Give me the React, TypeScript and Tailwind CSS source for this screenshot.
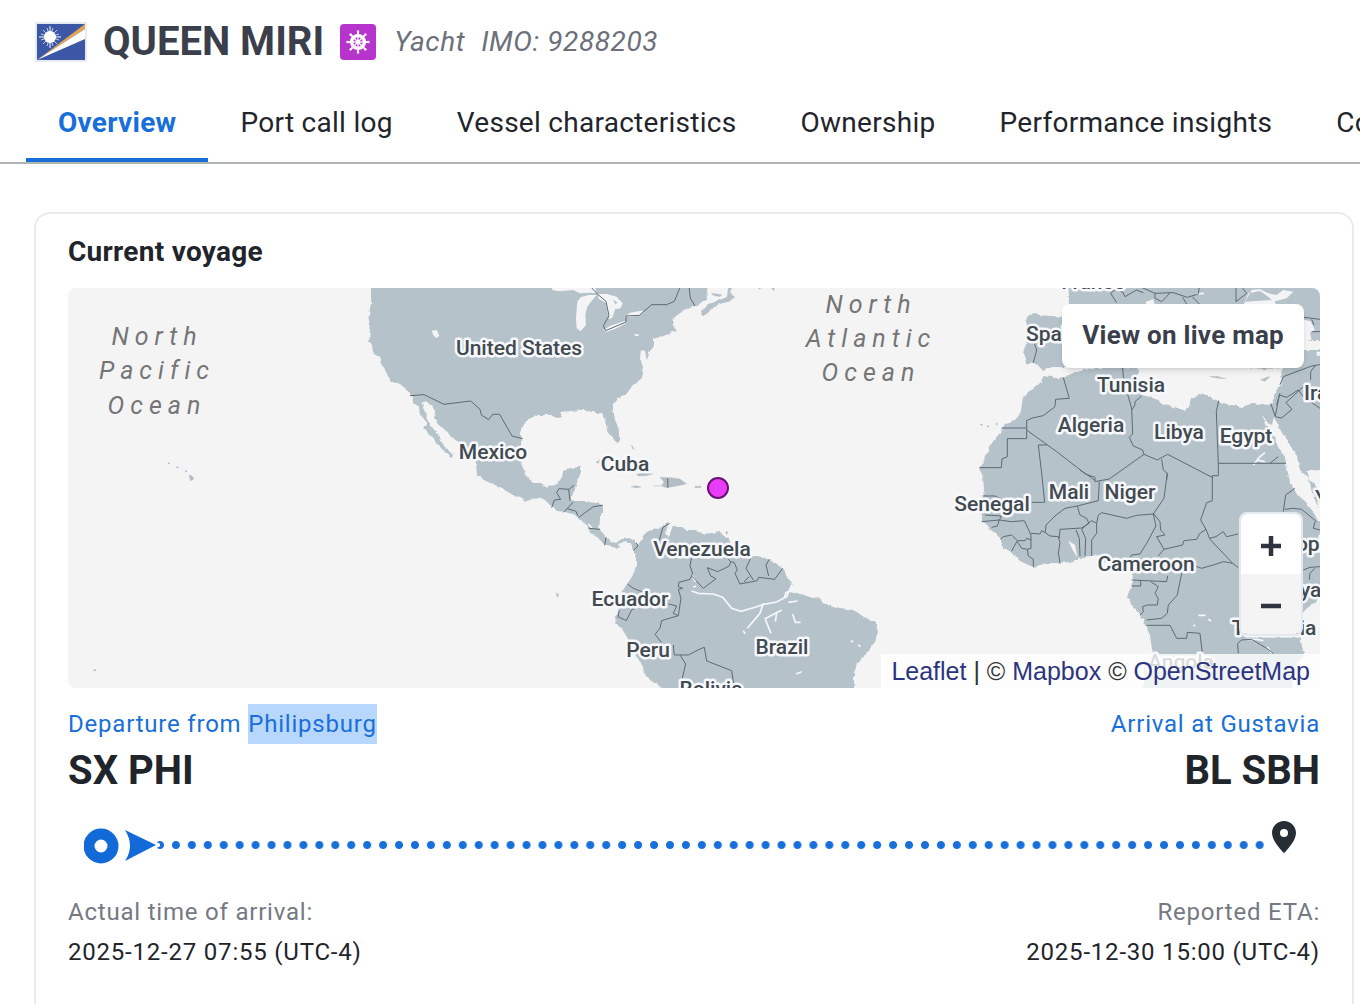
import { useState } from "react"
import clsx from "clsx";

interface MapLabel {
    text: string
    x: number
    y: number
    start?: boolean
}

interface BorderSheet {
    x: number
    y: number
    borders: string
    water?: string
    rivers?: string
    islands?: string
}

const tabs = ["Overview", "Port call log", "Vessel characteristics", "Ownership", "Performance insights", "Commercial"];

const labels: MapLabel[] = [
    { text: "United States", x: 519, y: 355 },
    { text: "Mexico", x: 493, y: 459 },
    { text: "Cuba", x: 625, y: 471 },
    { text: "Venezuela", x: 702, y: 556 },
    { text: "Ecuador", x: 630, y: 606 },
    { text: "Peru", x: 648, y: 657 },
    { text: "Brazil", x: 782, y: 654 },
    { text: "Bolivia", x: 711, y: 696 },
    { text: "France", x: 1093, y: 289 },
    { text: "Spain", x: 1026, y: 341, start: true },
    { text: "Tunisia", x: 1131, y: 392 },
    { text: "Algeria", x: 1091, y: 432 },
    { text: "Libya", x: 1179, y: 439 },
    { text: "Egypt", x: 1246, y: 443 },
    { text: "Mali", x: 1069, y: 499 },
    { text: "Niger", x: 1130, y: 499 },
    { text: "Senegal", x: 992, y: 511 },
    { text: "Cameroon", x: 1146, y: 571 },
    { text: "Angola", x: 1181, y: 669 },
    { text: "Tanzania", x: 1274, y: 635 },
    { text: "Iran", x: 1304, y: 400, start: true },
    { text: "Yemen", x: 1315, y: 505, start: true },
    { text: "Ethiopia", x: 1260, y: 551, start: true },
    { text: "Kenya", x: 1264, y: 597, start: true },
];

const oceans: MapLabel[] = [
    { text: "North", x: 157, y: 345 },
    { text: "Pacific", x: 157, y: 379 },
    { text: "Ocean", x: 157, y: 414 },
    { text: "North", x: 871, y: 313 },
    { text: "Atlantic", x: 871, y: 347 },
    { text: "Ocean", x: 871, y: 381 },
];

const land = [
    // americas
    "M371 280V303L369 315 368 322 370 330 369 341 372 345 373 352 379 358 383 367 386 372 390 380 392 382 400 384 405 388 410 393 411 396 414 403 419 407 420 414 424 419 427 425 423 428 428 433 432 436 436 442 440 447 446 453 451 457 453 455 449 451 444 445 440 441 438 434 434 430 431 425 428 420 426 414 423 408 422 402 427 402 432 405 436 412 434 418 437 423 443 429 450 435 454 439 460 443 464 450 474 459 476 465 477 475 490 483 500 487 513 495 527 501 538 497 545 500 552 507 557 511 565 512 573 514 579 518 584 523 589 529 590 533 595 535 600 540 606 545 612 546 617 549 619 547 618 544 625 541 631 545 633 550 636 553 636 567 633 575 627 584 622 592 619 603 618 612 615 617 616 623 622 629 627 637 632 647 637 657 643 667 644 673 650 679 660 686 663 695H854V673L857 663 864 658 867 652 875 642 878 632 875 622 867 618 853 610 840 608 823 603 820 599 810 597 797 593 789 592 792 583 787 577 783 568 777 564 768 559 757 557 744 556 737 550 728 538 720 532 712 533 703 534 695 530 687 530 682 527 673 527 670 532 668 537 665 533 670 523 667 522 662 527 655 529 647 532 642 539 638 545 636 542 630 538 623 539 620 539 615 543 610 541 606 537 602 532 599 528 600 520 602 512 603 505 597 502 587 501 575 501 571 500 573 493 575 488 577 483 581 473 581 467 570 468 563 471 562 478 557 484 548 487 540 483 533 483 528 478 523 468 519 458 522 438 520 433 522 427 525 422 537 415 550 415 557 418 563 417 560 412 570 411 583 410 597 413 602 413 605 420 607 430 612 437 617 443 619 440 619 430 616 422 613 413 613 406 617 400 627 393 633 386 642 378 643 372 642 363 640 358 641 349 645 352 647 360 650 351 653 346 653 339 660 337 672 332 677 331 673 326 673 319 680 312 690 308 695 306 703 302 708 299 707 291 709 280Z",
    // nova scotia
    "M701 311L702 316 707 314 713 307 720 304 730 301 735 297 730 292 736 280 728 288 727 297 717 301 708 304Z",
    // africa
    "M1044 375L1055 378 1065 377 1073 373 1087 369 1100 368 1122 367 1137 368 1139 372 1137 378 1143 387 1142 395 1153 398 1163 403 1173 407 1185 410 1189 407 1191 398 1198 394 1207 395 1218 401 1227 404 1242 407 1253 403 1268 405 1273 403 1275 397 1278 387 1283 382 1280 375 1283 368 1262 369 1240 366 1240 350H1330V490L1320 490 1310 480 1300 470 1297 457 1290 445 1282 433 1277 423 1274 417 1272 425 1268 423 1262 415 1265 424 1273 433 1278 447 1285 457 1287 468 1290 483 1298 495 1307 503 1315 515 1318 521 1330 522V598H1320L1305 610 1300 618 1300 633 1302 647 1305 653 1296 665 1290 695H1143L1144 670 1152 650 1150 635 1145 625 1142 617 1133 607 1127 597 1132 585 1133 573 1120 570 1104 560 1098 555 1083 557 1070 562 1057 563 1047 563 1033 567 1022 562 1012 552 1003 548 1002 540 990 528 982 522 982 515 982 498 984 490 983 478 980 470 985 457 992 443 1000 433 1003 427 1018 418 1021 410 1023 397 1032 390 1040 383Z",
    // europe
    "M1068 280L1069 297V304L1063 317 1050 316 1033 314 1025 318 1027 325V342L1023 352 1026 363 1037 364 1043 371 1052 367 1068 367 1080 340H1330V280Z",
    // arabia
    "M1307 470L1312 493 1318 507 1330 520V470Z",
].join(" ");

// each sheet is drawn at three times the map scale
const sheets: BorderSheet[] = [
    {
        x: 340, y: 280,
        borders: "M210 347L252 344 312 373 392 363 420 388 424 405 446 419 458 403 479 403 516 468 548 476",
        water: "M712 65L722 52 745 45 770 45 755 62 742 80 736 105 738 135 722 154 710 145 708 115ZM775 42L800 42 830 50 848 70 842 85 825 88 818 112 808 118 802 95 798 70 775 55ZM635 30L660 34 700 30 720 40 752 38 770 40 765 20 640 20ZM790 150L810 138 855 122 860 128 830 145 800 156ZM852 112L870 98 905 92 912 97 895 108ZM275 152L290 150 298 168 288 174 280 165Z",
        islands: "M875 495l8 14 -5 -4zM768 548l12 -10 -4 12zM820 60l12 8 -6 4z",
    },
    {
        x: 570, y: 284,
        borders: "M60 6L82 30 108 52 117 95 100 125 107 140 168 114 168 96 208 94 245 62 290 62 313 52 332 6M357 6L361 42 375 66",
        rivers: "M415 30L432 48 446 44M194 152l12 2",
        islands: "M425 28L455 32 450 38 430 34ZM560 8h14l-4 8zM600 8h14l-2 12z",
    },
    {
        x: 460, y: 440,
        borders: "M275 203L283 180 302 178 290 158 297 146 327 148 342 136M326 148L330 182M311 217L340 186M322 206L348 214 354 228M355 233L400 200 428 196M386 265L420 268M438 292L434 316M528 308L534 318 520 331M629 250L609 262 598 300M503 432L520 445 545 455M694 355L690 378 698 400 690 418 657 427 655 440 668 445 655 448 663 475 655 527 605 542 600 565 585 583 605 608M478 512L474 530 499 542 515 510 525 505M625 492L650 498 640 520 655 527M640 615L643 645 685 645 720 627M660 645L677 672 667 715M623 115L624 143",
        islands: "M580 137L605 138 612 125 600 112 635 113 660 117 680 132 650 138 620 143 605 138ZM512 140L530 137 543 141 530 144ZM530 103L550 98 578 102 560 107 535 108ZM705 139h18v4h-18zM515 18l6 10 -4 -4zM464 0h10l2 7h-6zM288 458L297 465 292 472Z",
        rivers: "M385 252L396 264M695 405L706 425",
    },
    {
        x: 640, y: 470,
        borders: "M155 318L190 355 228 326 212 318 202 293 233 305 268 288 272 275 283 278 292 300 285 310 300 342 352 332 356 322 404 328 428 295M260 262L272 275M332 265L318 295 340 330M312 335L328 320M388 268L378 285 386 318M180 537L193 532 200 573 275 602 281 640",
        rivers: "M155 363L175 370 220 372 248 382 275 415 303 424 345 412 372 403 410 396 440 380 455 345M432 385L438 368 452 362M370 400L360 430 322 475M374 447L425 420M376 448L393 490M458 432L466 457 482 457M410 430L406 455M445 397L473 393M157 320L168 335M160 352l8 -4M468 612L485 605M632 514h8M655 525l6 5M310 482l5 10",
        islands: "M258 184h4v8h-4z",
    },
    {
        x: 940, y: 280,
        borders: "M283 190L290 210 280 248M370 293L388 355 347 358 345 380 310 407 277 414 260 422 260 452M185 444L260 444M260 452L260 476 202 476 202 530 186 537 184 563 118 563M260 450L350 515 438 583 465 592 465 605 508 597 612 523 608 510 580 498 568 472 578 462 575 385 565 350M548 264L550 290 565 350M612 523L652 540 683 523 818 593M835 587L835 552 829 395 836 362M835 550L1038 550M990 550L1015 530M575 390L585 375 585 365 605 348M322 495L295 495 305 580 314 667M665 538L670 570 682 580 680 600M993 372L1006 410 1025 414 1056 388 1038 368 1090 320M1018 345L1040 352 1075 330 1090 350 1140 385M1018 345L1006 408M1020 340L1010 375M1020 315L1030 290 1115 258 1140 254M1112 300L1112 275 1125 258M512 40L525 30 548 36 555 50 590 30 610 38M512 40L530 68M645 40L700 38 742 52 775 42 778 20M645 40L645 55 665 65 680 50 690 38M600 20L645 40M728 52L740 72M757 50L778 72M888 20L888 65 920 40 905 20M1092 112L1140 118M1115 155L1140 155M1115 118L1122 135",
        water: "M915 65L925 40 960 33 985 50 1000 65 1040 55 1060 35 1030 30 1010 45 985 40 960 28 935 30 910 75 1010 75 1000 60ZM1085 118L1112 124 1125 150 1110 158 1115 180 1085 185ZM618 65L640 58 645 75 618 75ZM1130 215h14v12h-14z",
        rivers: "M768 42L792 40M940 555L960 530 975 518M950 540L975 545",
        islands: "M808 290L830 289 858 296 830 294ZM962 300L980 292 990 290 975 304ZM122 432h5v4h-5zM142 437h5v4h-5zM168 430h4v4h-4z",
    },
    {
        x: 940, y: 470,
        borders: "M130 78L165 78 178 85M135 135L185 138 178 150 125 155M178 150L172 168 155 172M178 150L215 155 253 152 273 195 273 235 262 238 265 258 280 268 280 290M182 208L190 200 215 195 232 212 222 230 215 243M232 215L245 235 262 238M232 212L255 212 260 205 273 210M273 190L300 192 305 182 316 188 318 165 345 138 375 115 412 108 475 92 478 35M316 188L330 198 355 200 360 218 355 250 360 278M360 178L358 205M360 178L425 174 447 160 440 145 420 135 412 108M408 180L418 205 420 258M425 178L437 205 435 258M455 258L455 210 470 190 470 160 455 152 445 160 425 178M470 160L475 135 485 128 560 145 590 136 640 132 672 85 682 10M640 130L660 155 662 180 675 195 650 200 672 238 728 225 732 212 770 208 780 190 798 178 782 150 800 98 817 92 817 17 835 17M640 132L648 168 620 220 600 252 575 255 565 268M798 178L810 208 878 280 895 293M810 205L828 200 850 185 860 200 895 192M672 238L655 258M878 280L850 275 820 285 785 295 765 288M575 330L680 335 683 318M725 310L712 375 685 405 682 430 665 445 620 450M575 348L602 348 602 332M632 335L655 350 645 370 655 385 652 405 622 405 608 410 610 425 600 435M620 466L690 466 710 505 740 505 742 487 780 490 787 550M275 97L314 97M895 550L893 520 905 510 935 508 980 535 1000 550M1030 125L1037 75 1065 55M1035 118L1060 115 1085 118 1130 155M1125 155L1120 175 1140 180M1090 300L1110 292 1140 290M1108 330L1110 310 1125 295M420 0L450 20 465 32",
        water: "M385 212L405 225 412 262 398 240Z",
        rivers: "M775 436h22M805 448l8 5M760 465l6 3M920 508L950 508 970 512M982 530L995 550",
    },
    {
        x: 60, y: 280,
        borders: "",
        islands: "M387 585L396 588 402 597 392 603ZM324 548h4v4h-4zM350 560h5v4h-5zM376 572h5v4h-5zM101 1169h7v3h-7z",
    },
];

function WorldMap() {
    return (
        <svg viewBox="68 288 1252 400" preserveAspectRatio="xMidYMid slice" className="block w-full h-full" role="img" aria-label="Vessel position">
            <defs>
                <filter id="coast" x="0" y="0" width="1" height="1">
                    <feTurbulence type="fractalNoise" baseFrequency="0.18" numOctaves="2" seed="4" result="noise" />
                    <feDisplacementMap in="SourceGraphic" in2="noise" scale="4" xChannelSelector="R" yChannelSelector="G" />
                </filter>
            </defs>
            <path d={land} fill="#b6c2ca" filter="url(#coast)" />
            {sheets.map((sheet, i) => (
                <g key={i} transform={`translate(${sheet.x} ${sheet.y}) scale(0.3333)`}>
                    {sheet.water && <path d={sheet.water} fill="#f4f4f6" />}
                    {sheet.rivers && <path d={sheet.rivers} fill="none" stroke="#f6f7fb" strokeWidth="5" />}
                    {sheet.islands && <path d={sheet.islands} fill="#b3bdc5" stroke="#b3bdc5" strokeWidth="1" />}
                    <path d={sheet.borders} fill="none" stroke="#5d6a73" strokeWidth="3" strokeLinejoin="round" />
                </g>
            ))}
            {oceans.map((label, i) => (
                <text key={i} x={label.x} y={label.y} textAnchor="middle"
                    className="fill-[#757575] text-[25px] italic tracking-[6px]">
                    {label.text}
                </text>
            ))}
            {labels.map((label) => (
                <text key={label.text} x={label.x} y={label.y} textAnchor={label.start ? "start" : "middle"}
                    className="fill-[#424a50] stroke-[#f6f8fc] stroke-[5px] text-[21px] font-medium [paint-order:stroke] [stroke-linejoin:round]">
                    {label.text}
                </text>
            ))}
            <circle cx="718" cy="488" r="10" fill="#e83cf7" stroke="#6b1173" strokeWidth="2" />
        </svg>
    )
}

function Flag() {
    return (
        <svg viewBox="0 0 48 36" className="w-12 h-9 mr-[2px] shrink-0 outline-2 outline-[#e6ebf2]" aria-label="Marshall Islands">
            <rect width="48" height="36" fill="#3b57a6" />
            <path d="M0 36L48 0V5Z" fill="#e2a650" />
            <path d="M0 36L48 5V15Z" fill="#fff" />
            <circle cx="13" cy="13" r="6" fill="#fff" />
            <path d="M13 2V24M2 13H24" stroke="#fff" strokeWidth="1" />
            <path d="M6 6L20 20M20 6L6 20M10 4L16 22M16 4L10 22M4 10L22 16M4 16L22 10" stroke="#fff" strokeWidth="0.7" />
        </svg>
    )
}

function WheelBadge() {
    const spokes = [0, 45, 90, 135, 180, 225, 270, 315];
    return (
        <svg viewBox="0 0 36 36" className="w-9 h-9 shrink-0" aria-hidden="true">
            <rect width="36" height="36" rx="4" fill="#b634cb" />
            <g transform="translate(18 18)">
                <circle r="6.4" fill="none" stroke="#fff" strokeWidth="3.4" />
                <circle r="1.9" fill="#fff" />
                {spokes.map((angle) => (
                    <g key={angle} transform={`rotate(${angle})`}>
                        <path d="M0 0V-6" stroke="#fff" strokeWidth="1.3" />
                        <path d="M-0.8 -7H0.8L1.3 -11.5H-1.3Z" fill="#fff" />
                    </g>
                ))}
            </g>
        </svg>
    )
}

export default function App() {
    const [activeTab, setActiveTab] = useState<string>("Overview");

    return (
        <div className="h-screen overflow-hidden bg-white font-[Roboto,sans-serif] text-[#1f252b]">
            <header className="flex items-center gap-4 pt-[18px] pl-[37px]">
                <Flag />
                <h1 className="text-[40px] leading-12 font-bold text-[#3b3f4b]">QUEEN MIRI</h1>
                <WheelBadge />
                <p className="flex gap-4 pl-0.5 text-[28px] leading-12 italic tracking-[0.02em] text-[#6c707b]">
                    <span>Yacht</span>
                    <span>IMO: 9288203</span>
                </p>
            </header>

            <nav role="tablist" className="flex mt-4 pl-[26px] border-b-2 border-[#b1b4b7] overflow-hidden">
                {tabs.map((tab) => (
                    <button key={tab} type="button" role="tab" aria-selected={activeTab === tab} onClick={() => setActiveTab(tab)}
                        className={clsx(
                            "h-20 px-8 pt-1.5 shrink-0 border-b-4 text-[28px] tracking-[0.01em] whitespace-nowrap cursor-pointer",
                            activeTab === tab ? "border-[#186fd9] text-[#186fd9] font-bold" : "border-transparent"
                        )}>
                        {tab}
                    </button>
                ))}
            </nav>

            <section className="mt-12 ml-[34px] mr-[6px] px-8 pt-5 pb-16 border-2 border-[#e8eaeb] rounded-2xl">
                <h2 className="mb-[18px] text-[28px] leading-9 font-bold tracking-[0.01em]">Current voyage</h2>

                <div className="relative h-100 rounded-lg overflow-hidden bg-[#f4f4f5]">
                    <WorldMap />
                    <button type="button"
                        className="absolute top-4 right-4 h-16 px-5 pb-0.5 rounded-lg bg-white text-[26px] font-bold text-[#3b3f4b] tracking-[0.01em] shadow-md cursor-pointer">
                        View on live map
                    </button>
                    <div className="absolute right-[17px] bottom-[52px] flex flex-col w-16 rounded-lg border-2 border-[#e3e9ee] overflow-hidden">
                        <button type="button" aria-label="Zoom in" className="flex items-center justify-center pt-1 h-15 bg-white cursor-pointer">
                            <svg viewBox="0 0 20 20" className="w-5 h-5"><path d="M10 0V20M0 10H20" stroke="#2f333f" strokeWidth="4.5" /></svg>
                        </button>
                        <button type="button" aria-label="Zoom out" className="flex items-center justify-center pt-1 h-15 bg-[#f4f4f5] cursor-pointer">
                            <svg viewBox="0 0 20 20" className="w-5 h-5"><path d="M0 10H20" stroke="#2f333f" strokeWidth="4.5" /></svg>
                        </button>
                    </div>
                    <div className="absolute right-0 bottom-0 px-2.5 bg-white/80 font-['Liberation_Sans',sans-serif] text-[25px] leading-[34px] text-[#333]">
                        <a href="#leaflet" className="text-[#2c3480]">Leaflet</a> | © <a href="#mapbox" className="text-[#2c3480]">Mapbox</a> © <a href="#osm" className="text-[#2c3480]">OpenStreetMap</a>
                    </div>
                </div>

                <div className="flex justify-between mt-4">
                    <div>
                        <a href="#departure" className="block text-[24px] leading-10 tracking-[0.033em] text-[#186fd9]">
                            Departure from <mark className="inline-block bg-[#b8d7fd] text-inherit">Philipsburg</mark>
                        </a>
                        <p className="text-[40px] leading-[54px] font-bold">SX PHI</p>
                    </div>
                    <div className="text-right">
                        <a href="#arrival" className="block text-[24px] leading-10 tracking-[0.033em] text-[#186fd9]">Arrival at Gustavia</a>
                        <p className="text-[40px] leading-[54px] font-bold">BL SBH</p>
                    </div>
                </div>

                <div className="flex items-center h-16 mt-3.5 pl-4 pr-6">
                    <svg viewBox="84 824 76 40" className="relative w-[76px] h-10 shrink-0" aria-hidden="true">
                        <path d="M124 829L158 845 124 862 131 846Z" fill="#fff" stroke="#fff" strokeWidth="4" />
                        <circle cx="101" cy="846" r="12" fill="none" stroke="#126ad8" strokeWidth="11" />
                        <path d="M125 830L156 845 125 861Q135 846 125 830Z" fill="#126ad8" />
                    </svg>
                    <div className="flex-1 h-2 mt-0.5 -ml-2 bg-[radial-gradient(circle,#186fd9_3.5px,transparent_4.5px)] bg-[length:16px_8px] bg-repeat-round" />
                    <svg viewBox="0 0 24 32" className="w-6 h-8 ml-1 mb-3.5 shrink-0" aria-hidden="true">
                        <path fillRule="evenodd" d="M12 0C5.4 0 0 5.2 0 11.8C0 19.5 7.5 27 11 31.3Q12 32.4 13 31.3C16.5 27 24 19.5 24 11.8C24 5.2 18.6 0 12 0ZM12 8A4 4 0 1 1 12 16A4 4 0 1 1 12 8Z" fill="#262d35" />
                    </svg>
                </div>

                <div className="flex justify-between mt-4 text-[24px] leading-10 tracking-[0.033em]">
                    <div>
                        <p className="text-[#747983]">Actual time of arrival:</p>
                        <p>2025-12-27 07:55 (UTC-4)</p>
                    </div>
                    <div className="text-right">
                        <p className="text-[#747983]">Reported ETA:</p>
                        <p>2025-12-30 15:00 (UTC-4)</p>
                    </div>
                </div>
            </section>
        </div>
    )
}
